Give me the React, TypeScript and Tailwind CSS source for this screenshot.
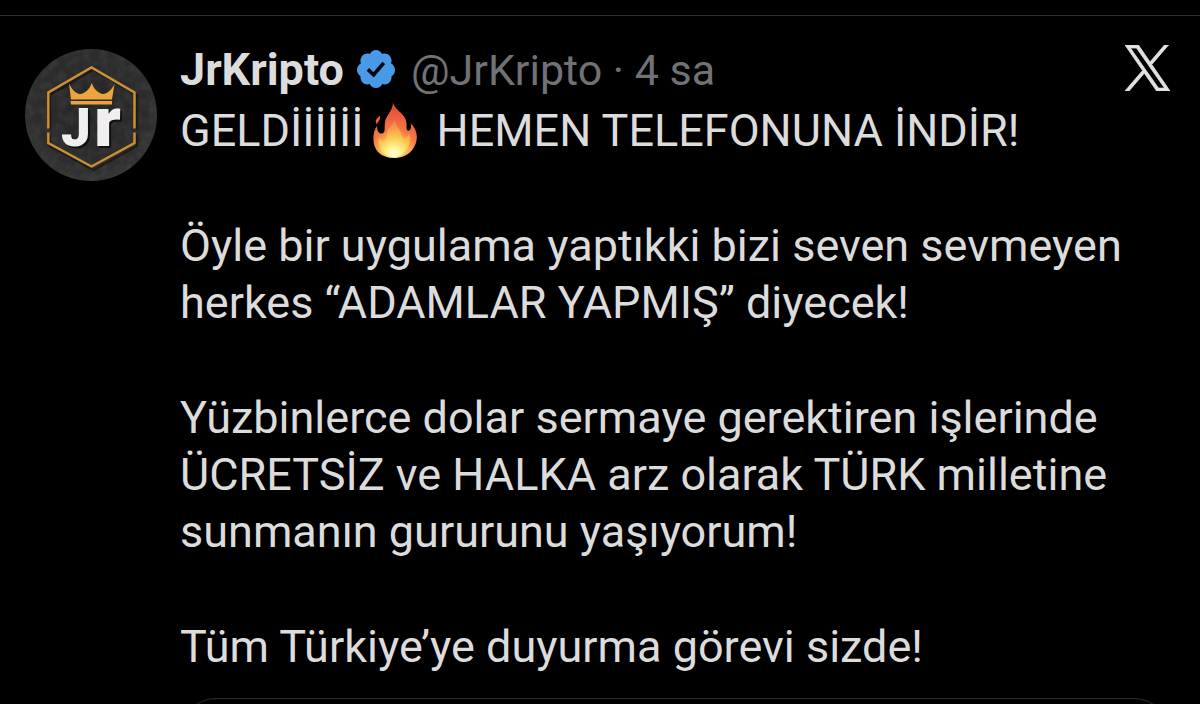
function Avatar() {
  return (
    <svg viewBox="0 0 132 132" className="size-[132px]" role="img" aria-label="JrKripto">
      <defs>
        <radialGradient id="disc" cx="0.5" cy="0.45" r="0.6">
          <stop offset="0" stopColor="#252526" />
          <stop offset="0.7" stopColor="#2c2c2d" />
          <stop offset="1" stopColor="#363637" />
        </radialGradient>
        <filter id="grain" x="0" y="0" width="1" height="1">
          <feTurbulence type="fractalNoise" baseFrequency="0.12" numOctaves="3" seed="4" />
          <feColorMatrix values="0 0 0 0 0.5  0 0 0 0 0.5  0 0 0 0 0.5  0.9 0 0 0 -0.32" />
          <feComposite operator="in" in2="SourceGraphic" />
        </filter>
      </defs>
      <circle cx="66" cy="66" r="66" fill="url(#disc)" />
      <circle cx="66" cy="66" r="66" fill="#888" filter="url(#grain)" opacity="0.2" />
      <g fill="none" strokeWidth="2.4">
        <path d="M25 80.500V46L68.500 20.500L112 46V80.500M25 85.500V97L68.500 121L112 97V85.500" stroke="#111" opacity="0.6" />
        <path d="M23.300 79.500V43.500L66.500 18.500L109.500 43.500V79.500M23.300 83.500V94L66.500 117.500L109.500 94V83.500" stroke="#cf9032" />
      </g>
      <path d="M44 34.500C47 41 51 44.500 55 45C60 44.500 64.500 40.500 66.700 34C69 40.500 73.500 44.500 78.500 45C82.500 44.500 86.500 41 89.500 35L87 50.500H46Z M45.500 52H87V55.500H46Z" fill="#eda43a" />
      <g fontFamily="Roboto, sans-serif" fontWeight="900">
        <g fill="#111">
          <text x="38" y="99" fontSize="53">J</text>
          <text x="71" y="99" fontSize="71">r</text>
        </g>
        <g fill="#f1eef0">
          <text x="36" y="97" fontSize="53">J</text>
          <text x="69" y="97" fontSize="71">r</text>
        </g>
      </g>
    </svg>
  );
}

function VerifiedBadge() {
  return (
    <svg viewBox="1.500 1.500 21 21" className="size-[38px]" role="img" aria-label="Onaylanmış hesap">
      <path
        fill="#4a99e9"
        d="M22.500 12.500c0-1.580-.875-2.950-2.148-3.600.154-.435.238-.905.238-1.400 0-2.210-1.710-3.998-3.818-3.998-.47 0-.92.084-1.336.250C14.818 2.415 13.510 1.500 12 1.500s-2.816.917-3.437 2.250c-.415-.165-.866-.250-1.336-.250-2.110 0-3.818 1.790-3.818 4 0 .494.083.964.237 1.400-1.272.650-2.147 2.018-2.147 3.600 0 1.495.782 2.798 1.942 3.486-.020.170-.032.340-.032.514 0 2.210 1.708 4 3.818 4 .470 0 .920-.086 1.335-.250.620 1.334 1.926 2.250 3.437 2.250 1.512 0 2.818-.916 3.437-2.250.415.163.865.248 1.336.248 2.110 0 3.818-1.790 3.818-4 0-.174-.012-.344-.033-.513 1.158-.687 1.943-1.990 1.943-3.484z"
      />
      <path d="M7.500 12.200L10.700 15.200L16.300 8.600" fill="none" stroke="#05080c" strokeWidth="2" />
    </svg>
  );
}

function XLogo() {
  return (
    <svg viewBox="0 0 1200 1227" className="h-[46px] w-[45px]" fill="#e2e2e2" stroke="#e2e2e2" strokeWidth="22" role="img" aria-label="X">
      <path d="M714.163 519.284L1160.890 0H1055.030L667.137 450.887L357.328 0H0L468.492 681.821L0 1226.370H105.866L515.491 750.218L842.672 1226.370H1200L714.137 519.284H714.163ZM569.165 687.828L521.697 619.934L144.011 79.694H306.615L611.412 515.685L658.880 583.579L1055.080 1150.300H892.476L569.165 687.854V687.828Z" />
    </svg>
  );
}

function Flame() {
  return (
    <svg viewBox="0 0 44 56" className="ml-[10px] mr-2 inline-block h-14 w-11 align-[-12px]" role="img" aria-label="ateş">
      <defs>
        <radialGradient id="outer" gradientUnits="userSpaceOnUse" cx="21" cy="50" r="48">
          <stop offset="0" stopColor="#fff3a0" />
          <stop offset="0.300" stopColor="#fbb254" />
          <stop offset="0.480" stopColor="#f37a45" />
          <stop offset="0.750" stopColor="#ec5c3c" />
          <stop offset="1" stopColor="#dc4433" />
        </radialGradient>
        <radialGradient id="inner" gradientUnits="userSpaceOnUse" cx="21" cy="52" r="36">
          <stop offset="0" stopColor="#ffffe8" />
          <stop offset="0.220" stopColor="#fff18a" />
          <stop offset="0.480" stopColor="#fbc64d" />
          <stop offset="0.720" stopColor="#f79a4a" />
          <stop offset="1" stopColor="#f27a48" />
        </radialGradient>
      </defs>
      <path
        fill="url(#outer)"
        d="M20 0C21 5 25 8 29 12C33 16 34 20 33.500 25C33 29 36 30 37.500 27C38.500 25 38 23 37.500 21.500C41 24 43.500 29 43.800 34C44.300 45 36 56 21 56C8 56 .500 48 .500 38C.200 33 1 28 4 24C4 29 6 32 9 31.500C13 31 11 26 12 20C13 13 20 9 20 0Z"
      />
      <path fill="#e85b3e" d="M7 13.500C7.500 16 6.800 18 5.500 19.500C4.500 20.800 4 21.500 3.600 22.500C2.200 20 2.500 17.500 4.500 15.800C5.600 14.900 6.500 14.400 7 13.500Z" />
      <path
        fill="url(#inner)"
        d="M21.500 18C23 24 27 27 28 31C29 35 30 38 33 36C35 35 36 33 36 31C39 40 35 54 21 55C8 54 4 44 6 36C8 39 11 40 13 37C15 33 13 30 16 26C19 23 21 21 21.500 18Z"
      />
    </svg>
  );
}

export default function App() {
  return (
    <main className="h-screen overflow-hidden bg-black pt-[15px] font-['Roboto',sans-serif] text-[45px] leading-[57px] text-[#dcdcdc]">
      <article className="flex gap-[23px] border-t border-[#303030] pt-6 pr-[30px] pl-[25px]">
        <div className="shrink-0 pt-[9px]">
          <Avatar />
        </div>
        <div className="min-w-0 flex-1">
          <header className="flex items-start justify-between pb-0.5">
            <div className="flex items-center whitespace-nowrap leading-[60px]">
              <a href="#profile" className="font-bold">JrKripto</a>
              <span className="mr-4 mb-0.5 ml-[13px]">
                <VerifiedBadge />
              </span>
              <span className="text-[43px] text-[#717276]">@JrKripto · 4 sa</span>
            </div>
            <a href="#x" className="mt-[5px]">
              <XLogo />
            </a>
          </header>
          <div className="flex flex-col gap-[58px]">
            <p>
              GELDİİİİİİ
              <Flame /> HEMEN TELEFONUNA İNDİR!
            </p>
            <p>Öyle bir uygulama yaptıkki bizi seven sevmeyen herkes “ADAMLAR YAPMIŞ” diyecek!</p>
            <p>Yüzbinlerce dolar sermaye gerektiren işlerinde ÜCRETSİZ ve HALKA arz olarak TÜRK milletine sunmanın gururunu yaşıyorum!</p>
            <p>Tüm Türkiye’ye duyurma görevi sizde!</p>
          </div>
          <div className="mt-[23px] h-80 rounded-[36px] border border-[#2c2d2f]" />
        </div>
      </article>
    </main>
  );
}
